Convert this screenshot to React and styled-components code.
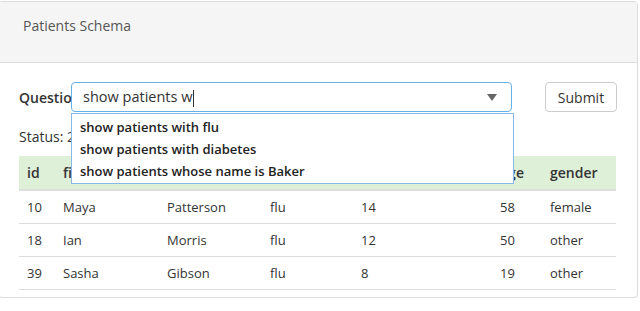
import styled, { createGlobalStyle } from 'styled-components';

const GlobalStyle = createGlobalStyle`
  body {
    margin: 0;
    background: #ffffff;
    font-family: 'Open Sans', 'DejaVu Sans', sans-serif;
    color: #333333;
  }
`;

const Panel = styled.div`
  margin: 1px 0 0 -2px;
  width: 638px;
  border: 1px solid #dddddd;
  border-radius: 4px;
  box-shadow: 0 1px 2px rgba(0, 0, 0, 0.06);
  background: #ffffff;
`;

const PanelHeading = styled.div`
  height: 61px;
  box-sizing: border-box;
  padding: 14px 24px;
  background: #f5f5f5;
  border-bottom: 1px solid #dddddd;
  font-size: 14px;
  color: #555555;
  font-weight: 500;
`;

const PanelBody = styled.div`
  padding: 19px 19px 7px 20px;
`;

const FormRow = styled.div`
  display: flex;
  align-items: center;
  height: 30px;
`;

const Label = styled.div`
  width: 52px;
  overflow: hidden;
  white-space: nowrap;
  font-size: 14px;
  font-weight: 600;
`;

const SelectBox = styled.div`
  position: relative;
  width: 441px;
  height: 30px;
  box-sizing: border-box;
  border: 1px solid #66afe9;
  border-radius: 4px;
  display: flex;
  align-items: center;
  padding: 0 14px 0 11px;
  font-size: 14.5px;
  color: #333333;
`;

const Caret = styled.span`
  display: inline-block;
  width: 1px;
  height: 17px;
  margin-left: 1px;
  background: #333333;
  vertical-align: middle;
`;

const Value = styled.div`
  flex: 1;
`;

const Arrow = styled.span`
  width: 0;
  height: 0;
  border-left: 5px solid transparent;
  border-right: 5px solid transparent;
  border-top: 7px solid #666666;
`;

const Menu = styled.ul`
  position: absolute;
  top: 30px;
  left: -1px;
  width: 443px;
  box-sizing: border-box;
  margin: 0;
  padding: 2px 0 1px;
  list-style: none;
  background: #ffffff;
  border: 1px solid #8ab8e6;
  z-index: 2;
`;

const MenuItem = styled.li`
  padding: 0 8px;
  line-height: 22px;
  font-size: 13px;
  font-weight: 600;
  color: #222222;
`;

const SubmitButton = styled.button`
  margin-left: 33px;
  width: 72px;
  height: 30px;
  border: 1px solid #cccccc;
  border-radius: 4px;
  background: #ffffff;
  font-family: inherit;
  font-size: 14px;
  color: #333333;
`;

const Status = styled.div`
  margin-top: 16px;
  font-size: 14px;
  font-weight: 500;
  line-height: 17px;
`;

const Table = styled.table`
  margin-top: 11px;
  width: 597px;
  border-collapse: collapse;
  table-layout: fixed;
  font-size: 13px;
`;

const HeadCell = styled.th`
  box-sizing: border-box;
  width: ${({ $w }) => $w}px;
  height: 34px;
  padding: 0 8px;
  text-align: left;
  font-weight: 600;
  font-size: 14px;
  white-space: nowrap;
  overflow: hidden;
  background: #dff0d8;
  border-bottom: 2px solid #dddddd;
`;

const Cell = styled.td`
  height: 32px;
  padding: 0 8px;
  border-bottom: 1px solid #dddddd;
  font-weight: 500;
`;

const columns = [
  ['id', 36],
  ['first_name', 104],
  ['last_name', 103],
  ['disease', 91],
  ['stay_days', 139],
  ['age', 50],
  ['gender', 74],
];

const rows = [
  ['10', 'Maya', 'Patterson', 'flu', '14', '58', 'female'],
  ['18', 'Ian', 'Morris', 'flu', '12', '50', 'other'],
  ['39', 'Sasha', 'Gibson', 'flu', '8', '19', 'other'],
];

const suggestions = [
  'show patients with flu',
  'show patients with diabetes',
  'show patients whose name is Baker',
];

function App() {
  return (
    <>
      <GlobalStyle />
      <Panel>
        <PanelHeading>Patients Schema</PanelHeading>
        <PanelBody>
          <FormRow>
            <Label>Question:</Label>
            <SelectBox>
              <Value>
                show patients w<Caret />
              </Value>
              <Arrow />
              <Menu>
                {suggestions.map((s) => (
                  <MenuItem key={s}>{s}</MenuItem>
                ))}
              </Menu>
            </SelectBox>
            <SubmitButton>Submit</SubmitButton>
          </FormRow>
          <Status>Status: 200</Status>
          <Table>
            <thead>
              <tr>
                {columns.map(([name, w]) => (
                  <HeadCell key={name} $w={w}>
                    {name}
                  </HeadCell>
                ))}
              </tr>
            </thead>
            <tbody>
              {rows.map((row) => (
                <tr key={row[0]}>
                  {row.map((value, i) => (
                    <Cell key={`${row[0]}-${i}`}>{value}</Cell>
                  ))}
                </tr>
              ))}
            </tbody>
          </Table>
        </PanelBody>
      </Panel>
    </>
  );
}

export default App;
